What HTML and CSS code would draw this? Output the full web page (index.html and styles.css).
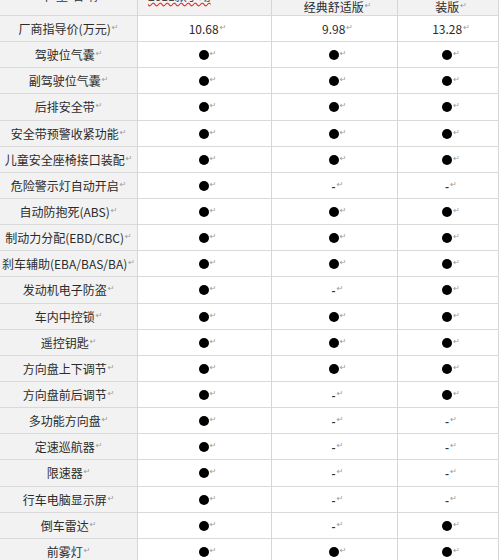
FILE: index.html
```html
<!DOCTYPE html>
<html lang="zh">
<head>
<meta charset="utf-8">
<link rel="stylesheet" href="styles.css">
</head>
<body>
<div class="grid" id="grid">
  <div class="cell head label"><span class="cut cut-1">车型名称</span></div>
  <div class="cell head"><span class="cut cut-2"><span class="sq">2011款手动</span></span></div>
  <div class="cell head"><span class="ht">经典舒适版<i class="r">↵</i></span></div>
  <div class="cell head"><span class="ht">装版<i class="r">↵</i></span></div>
</div>
<script src="app.js"></script>
</body>
</html>
```
FILE: app.js
```js
var rows = [
  ["厂商指导价(万元)", "10.68", "9.98", "13.28"],
  ["驾驶位气囊", "o", "o", "o"],
  ["副驾驶位气囊", "o", "o", "o"],
  ["后排安全带", "o", "o", "o"],
  ["安全带预警收紧功能", "o", "o", "o"],
  ["儿童安全座椅接口装配", "o", "o", "o"],
  ["危险警示灯自动开启", "o", "-", "-"],
  ["自动防抱死(ABS)", "o", "o", "o"],
  ["制动力分配(EBD/CBC) ", "o", "o", "o"],
  ["刹车辅助(EBA/BAS/BA) ", "o", "o", "o"],
  ["发动机电子防盗", "o", "-", "o"],
  ["车内中控锁", "o", "o", "o"],
  ["遥控钥匙", "o", "o", "o"],
  ["方向盘上下调节", "o", "o", "o"],
  ["方向盘前后调节", "o", "-", "o"],
  ["多功能方向盘", "o", "-", "-"],
  ["定速巡航器", "o", "-", "-"],
  ["限速器", "o", "-", "-"],
  ["行车电脑显示屏", "o", "-", "-"],
  ["倒车雷达", "o", "-", "o"],
  ["前雾灯", "o", "o", "o"]
];
var grid = document.getElementById("grid");
rows.forEach(function (r) {
  r.forEach(function (v, i) {
    var c = document.createElement("div");
    c.className = "cell" + (i === 0 ? " label" : "");
    var t = document.createElement("span");
    t.className = "txt";
    if (v === "o") {
      var d = document.createElement("span");
      d.className = "dot";
      t.appendChild(d);
    } else if (v === "-") {
      var s = document.createElement("span");
      s.className = "dash";
      s.textContent = "-";
      t.appendChild(s);
    } else {
      t.appendChild(document.createTextNode(v));
    }
    var m = document.createElement("i");
    m.className = "r";
    m.textContent = "↵";
    t.appendChild(m);
    c.appendChild(t);
    grid.appendChild(c);
  });
});
```
FILE: styles.css
```css
html, body {
  margin: 0;
  padding: 0;
  background: #ffffff;
}
body {
  font-family: "Noto Sans CJK SC", "Noto Sans", sans-serif;
  font-size: 12px;
  color: #2b2b2b;
  width: 500px;
  height: 560px;
  overflow: hidden;
}
.grid {
  display: grid;
  grid-template-columns: 138px 134px 126px 101px;
  grid-template-rows: 16px;
  grid-auto-rows: 26.15px;
}
.cell {
  box-sizing: border-box;
  border-right: 1px solid #d6d6d6;
  border-bottom: 1px solid #d9d9d9;
  display: flex;
  align-items: center;
  justify-content: center;
  white-space: nowrap;
  overflow: hidden;
  background: #ffffff;
}
.label {
  background: #f2f2f2;
}
.head {
  background: #f2f2f2;
  align-items: flex-end;
  position: relative;
}
.txt {
  display: inline-flex;
  align-items: center;
  line-height: 14px;
  padding-top: 1px;
  padding-left: 6px;
}
.label .txt {
  padding-left: 0;
}
.ht {
  display: inline-flex;
  align-items: center;
  line-height: 14px;
  margin-bottom: 1px;
  padding-left: 6px;
}
.cut {
  position: absolute;
  top: -11px;
  line-height: 14px;
  color: #333;
}
.cut-1 { left: 40px; letter-spacing: 4px; }
.cut-2 { left: 10px; }
.sq {
  text-decoration: underline wavy #d33;
  text-underline-offset: 1px;
  color: #444;
}
.dot {
  display: inline-block;
  width: 10px;
  height: 10px;
  border-radius: 50%;
  background: #000;
}
.dash {
  font-size: 11px;
  font-weight: bold;
  color: #333;
}
.r {
  font-style: normal;
  font-family: "DejaVu Sans", sans-serif;
  font-size: 8px;
  color: #9a9a9a;
  margin-left: 1px;
  position: relative;
  top: -1px;
}
```
